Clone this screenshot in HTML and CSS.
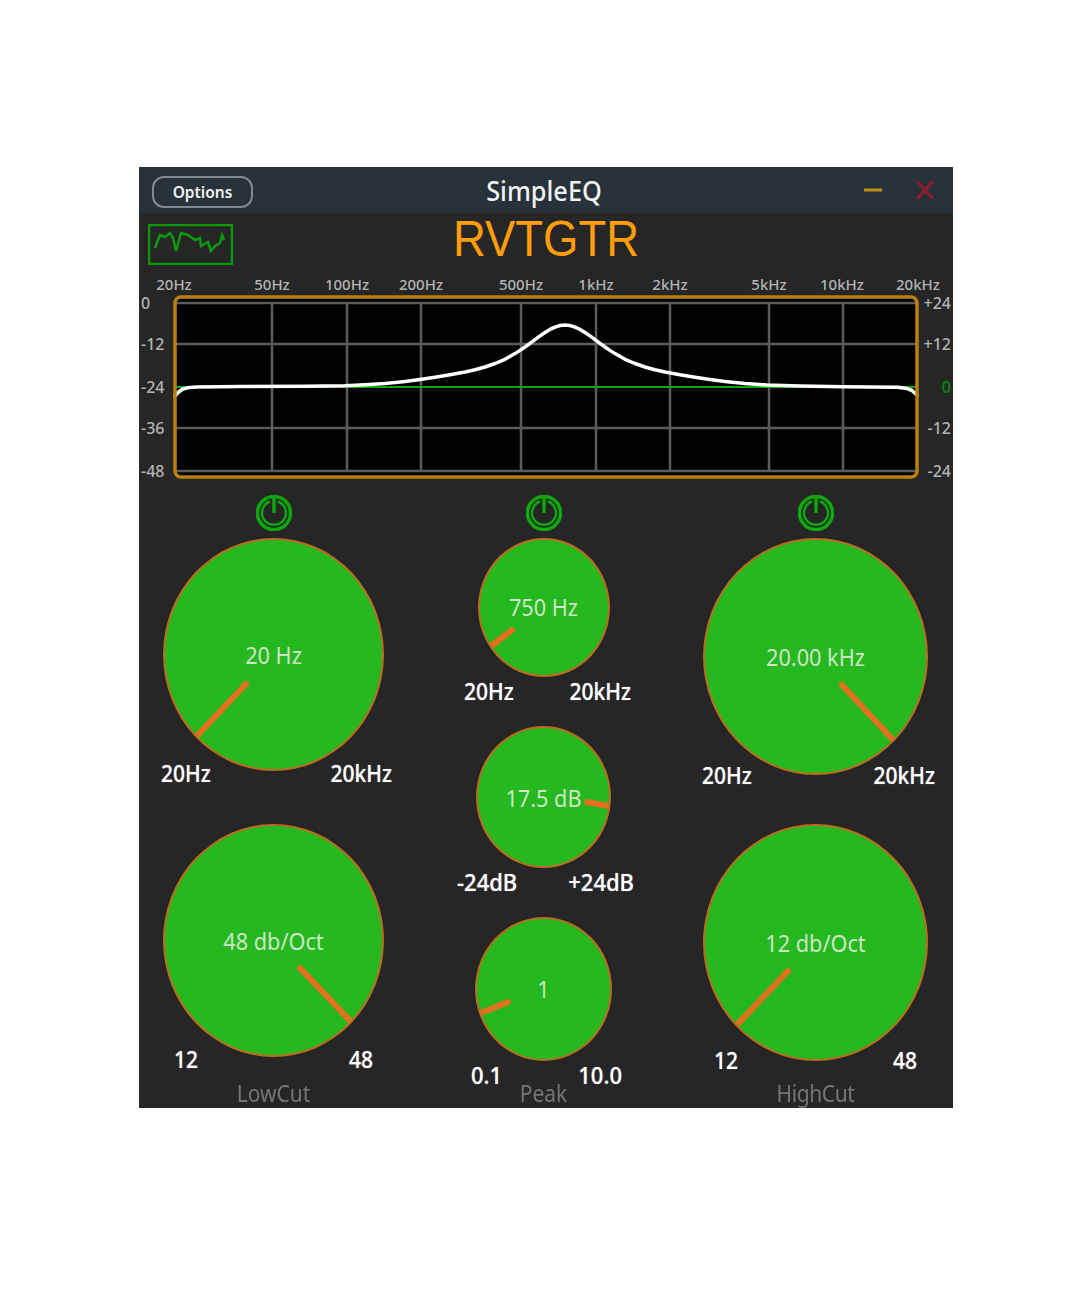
FILE: index.html
```html
<!DOCTYPE html>
<html lang="en">
<head>
<meta charset="utf-8">
<title>SimpleEQ</title>
<link rel="stylesheet" href="styles.css">
</head>
<body>
<main class="window">
  <header class="titlebar">
    <div class="titlebar-left"><button class="options">Options</button></div>
    <h1 class="app-name">SimpleEQ</h1>
    <div class="win-controls">
      <svg class="win-icon" viewBox="0 0 18 18"><path class="min" d="M0 9H18"/></svg>
      <svg class="win-icon" viewBox="0 0 18 18"><path class="close" d="M1 0L17 18M17 0L1 18"/></svg>
    </div>
  </header>
  <div class="brandbar">
    <div class="brand-left">
      <svg class="logo" viewBox="0 0 85 41"><rect x="1" y="1" width="83" height="39"/><polyline points="7,24 12,11 17,13 22,9 25,14 28,27 33,9 40,11 47,16 52,14 53,22 60,18 63,27 67,22 72,19 74,11 76,16"/></svg>
    </div>
    <div class="brand">RVTGTR</div>
    <div></div>
  </div>
  <svg class="analyzer" viewBox="139 273 814 209">
    <rect class="plot" x="175" y="297" width="742" height="180" rx="6"/>
    <path class="grid" d="M175 303H917M175 344H917M175 428H917M175 471H917M272 303V471M347 303V471M421 303V471M521 303V471M596 303V471M670 303V471M769 303V471M843 303V471"/>
    <path class="zero" d="M175 387H917"/>
    <polyline class="curve" points="175,396 178,392.500 182,389.500 187,387.800 197,386.900 240,386.600 305,386.300 345,385.700 365,384.800 385,383.500 405,381.500 420,379.400 435,377.300 450,374.800 465,372 475,369.800 485,367 495,363.500 505,359.300 515,353.600 520,350.400 525,347 530,343.300 535,339.600 540,335.900 545,332.500 550,329.400 555,327.100 560,325.500 565,325 570,325.500 575,327.100 580,329.400 585,332.500 590,335.900 595,339.600 600,343.300 605,347 610,350.400 615,353.600 625,359.300 635,363.500 645,367 655,369.800 665,372 680,374.800 695,377.200 710,379.400 725,381.500 745,383.500 767,385 800,386 843,386.700 897,387.200 906,388.200 912,390.500 917,395"/>
    <rect class="frame" x="175" y="297" width="742" height="180" rx="6"/>
    <g class="axis-top">
      <text x="174" y="290">20Hz</text><text x="272" y="290">50Hz</text><text x="347" y="290">100Hz</text><text x="421" y="290">200Hz</text><text x="521" y="290">500Hz</text><text x="596" y="290">1kHz</text><text x="670" y="290">2kHz</text><text x="769" y="290">5kHz</text><text x="842" y="290">10kHz</text><text x="918" y="290">20kHz</text>
    </g>
    <g class="axis-left">
      <text x="141" y="309">0</text><text x="141" y="350">-12</text><text x="141" y="393">-24</text><text x="141" y="434">-36</text><text x="141" y="477">-48</text>
    </g>
    <g class="axis-right">
      <text x="951" y="309">+24</text><text x="951" y="350">+12</text><text class="axis-zero" x="951" y="393">0</text><text x="951" y="434">-12</text><text x="951" y="477">-24</text>
    </g>
  </svg>
  <section class="controls">
    <div class="column column-low">
      <svg class="power" viewBox="0 0 36 36"><circle cx="18" cy="18" r="16.500"/><path class="power-inner" d="M14 6.500A12 12 0 1 0 22 6.500"/><path d="M18 2V18"/></svg>
      <div class="knob knob-low">
        <svg class="pointer" viewBox="0 0 221 233"><line x1="83" y1="146" x2="30" y2="202"/></svg>
        <span class="value">20 Hz</span>
      </div>
      <div class="range range-a"><span>20Hz</span><span>20kHz</span></div>
      <div class="knob knob-low knob-second">
        <svg class="pointer" viewBox="0 0 221 233"><line x1="137" y1="144" x2="192" y2="202"/></svg>
        <span class="value">48 db/Oct</span>
      </div>
      <div class="range range-b"><span>12</span><span>48</span></div>
      <div class="band band-low"><span>LowCut</span></div>
    </div>
    <div class="column column-peak">
      <svg class="power" viewBox="0 0 36 36"><circle cx="18" cy="18" r="16.500"/><path class="power-inner" d="M14 6.500A12 12 0 1 0 22 6.500"/><path d="M18 2V18"/></svg>
      <div class="knob knob-freq">
        <svg class="pointer" viewBox="0 0 132 139"><line x1="34" y1="92" x2="8" y2="112"/></svg>
        <span class="value value-up">750 Hz</span>
      </div>
      <div class="range range-c"><span>20Hz</span><span>20kHz</span></div>
      <div class="knob knob-gain">
        <svg class="pointer" viewBox="0 0 135 142"><line x1="111" y1="76" x2="138" y2="81"/></svg>
        <span class="value value-down">17.5 dB</span>
      </div>
      <div class="range range-d"><span>-24dB</span><span>+24dB</span></div>
      <div class="knob knob-q">
        <svg class="pointer" viewBox="0 0 137 144"><line x1="33" y1="85" x2="1" y2="98"/></svg>
        <span class="value">1</span>
      </div>
      <div class="range range-e"><span>0.1</span><span>10.0</span></div>
      <div class="band band-peak"><span>Peak</span></div>
    </div>
    <div class="column column-high">
      <svg class="power" viewBox="0 0 36 36"><circle cx="18" cy="18" r="16.500"/><path class="power-inner" d="M14 6.500A12 12 0 1 0 22 6.500"/><path d="M18 2V18"/></svg>
      <div class="knob knob-high">
        <svg class="pointer" viewBox="0 0 225 237"><line x1="139" y1="147" x2="193" y2="205"/></svg>
        <span class="value">20.00 kHz</span>
      </div>
      <div class="range range-f"><span>20Hz</span><span>20kHz</span></div>
      <div class="knob knob-high knob-second-high">
        <svg class="pointer" viewBox="0 0 225 237"><line x1="85" y1="147" x2="30" y2="205"/></svg>
        <span class="value">12 db/Oct</span>
      </div>
      <div class="range range-g"><span>12</span><span>48</span></div>
      <div class="band band-high"><span>HighCut</span></div>
    </div>
  </section>
</main>
</body>
</html>
```
FILE: styles.css
```css
* { box-sizing: border-box; }
html, body { margin: 0; background: #fff; }
body { padding: 167px 0 0 139px; font-family: "Noto Sans", "Open Sans", sans-serif; }

.window {
  width: 814px;
  height: 941px;
  background: #262626;
  display: flex;
  flex-direction: column;
  filter: blur(0.6px);
}

.titlebar {
  height: 46px;
  flex: none;
  background: #28323a;
  display: grid;
  grid-template-columns: 1fr auto 1fr;
  align-items: center;
  padding: 0 19px 0 13px;
}
.options {
  width: 101px;
  height: 32px;
  margin-top: 4px;
  display: block;
  background: transparent;
  border: 2px solid #7f8a92;
  border-radius: 12px;
  color: #f2f2f2;
  font: 600 15.500px "Noto Sans", sans-serif;
  padding: 0;
}
.app-name {
  margin: 3px 0 0;
  color: #f2f2f2;
  font: 500 25.300px/1 "Noto Sans", sans-serif;
  transform: translateX(1px) scaleY(1.05);
}
.win-controls { display: flex; justify-content: flex-end; gap: 34px; }
.win-icon { width: 18px; height: 18px; display: block; fill: none; stroke-width: 3; }
.min { stroke: #bd9313; }
.close { stroke: #8f1c2c; }

.brandbar {
  height: 60px;
  flex: none;
  display: grid;
  grid-template-columns: 1fr auto 1fr;
}
.logo { display: block; width: 85px; height: 41px; margin: 11px 0 0 9px; fill: none; stroke: #0b9a0b; stroke-width: 2.500; }
.brand {
  color: #ff9d0a;
  font: 400 45.500px/52px "Liberation Sans", Arial, sans-serif;
  height: 52px;
  margin-top: 1px;
  transform: scaleY(1.08);
}

.analyzer { display: block; width: 814px; height: 209px; flex: none; }
.plot { fill: #000; }
.grid { fill: none; stroke: #5c5c5c; stroke-width: 2.500; }
.zero { stroke: #0aa80a; stroke-width: 2; fill: none; }
.curve { fill: none; stroke: #fff; stroke-width: 3.500; stroke-linecap: round; stroke-linejoin: round; }
.frame { fill: none; stroke: #bb7f12; stroke-width: 3.500; }
.axis-top, .axis-left, .axis-right { fill: #b4b4b4; font-size: 15px; font-weight: 500; font-family: "Noto Sans", sans-serif; }
.axis-left, .axis-right { font-size: 16px; }
.axis-top { text-anchor: middle; }
.axis-right { text-anchor: end; }
.axis-right .axis-zero { fill: #0a8a0a; }

.controls {
  flex: 1;
  display: grid;
  grid-template-columns: 247px 187px 251px;
  column-gap: 53px;
  padding: 13px 0 0 11px;
}
.column { display: flex; flex-direction: column; align-items: center; }
.power { width: 36px; height: 36px; flex: none; display: block; fill: none; stroke: #0aa80a; stroke-width: 3.500; }
.power .power-inner { stroke-width: 2.500; }

.knob {
  position: relative;
  flex: none;
  margin-top: 7px;
  border: 2px solid #bd6c1f;
  border-radius: 50%;
  background: #26b81f;
  box-shadow: 0 0 2px #1b2530;
  overflow: hidden;
  display: grid;
  place-items: center;
}
.knob-low { width: 221px; height: 233px; }
.knob-high { width: 225px; height: 237px; }
.knob-freq { width: 132px; height: 139px; }
.knob-gain { width: 135px; height: 142px; margin-top: 23px; }
.knob-q { width: 137px; height: 144px; margin-top: 24px; }
.knob-second { margin-top: 39px; }
.knob-second-high { margin-top: 37px; }
.pointer {
  position: absolute;
  inset: -2px;
  width: calc(100% + 4px);
  height: calc(100% + 4px);
  stroke: #e2701f;
  stroke-width: 6;
  stroke-linecap: round;
}
.value {
  position: relative;
  color: #cbe6c4;
  font-size: 21.700px;
  line-height: 24px;
  transform: scaleY(1.08);
}
.value-up { top: -1px; }
.value-down { top: 1px; }

.range {
  width: 100%;
  height: 24px;
  flex: none;
  display: flex;
  justify-content: space-between;
  color: #fff;
  font-size: 21px;
  font-weight: 500;
  line-height: 24px;
  text-shadow: 0 0 1px rgba(255, 255, 255, 0.6);
}
.range span { display: inline-block; transform: scaleY(1.08); }
.range-a { margin-top: -10px; padding: 0 5px 0 11px; }
.range-b { margin-top: -10px; padding: 0 24px; }
.range-c { margin-top: 2px; padding: 0 6px 0 14px; }
.range-d { margin-top: 1px; padding: 0 3px 0 7px; font-size: 22px; }
.range-e { margin-top: 1px; padding: 0 15px 0 21px; font-size: 22px; }
.range-f { margin-top: -12px; padding: 0 6px 0 12px; }
.range-g { margin-top: -13px; padding: 0 24px; }

.band { color: #767676; font-size: 21px; line-height: 24px; height: 24px; flex: none; }
.band span { display: inline-block; transform: scaleY(1.1); }
.band-low { margin-top: 10px; }
.band-peak { margin-top: -5px; }
.band-high { margin-top: 9px; letter-spacing: -0.400px; }
```
